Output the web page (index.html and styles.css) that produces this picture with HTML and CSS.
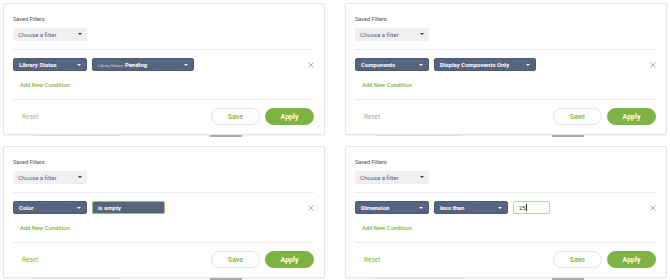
FILE: index.html
```html
<!DOCTYPE html>
<html lang="en">
<head>
    <meta charset="UTF-8">
    <meta name="viewport" content="width=device-width, initial-scale=1.0">
    <title>Filter Panels</title>
    <link rel="stylesheet" href="styles.css">
</head>
<body>
    <div class="panel-grid">

        <div class="panel-cell">
            <div class="filter-panel">
                <div class="saved-label">Saved Filters</div>
                <div class="saved-select">Choose a filter<span class="caret"></span></div>
                <div class="divider"></div>
                <div class="condition-row">
                    <div class="cond-select field-sm">Library Status<span class="caret light"></span></div>
                    <div class="cond-select field-lg"><span class="prefix">Library Status:</span> Pending<span class="caret light"></span></div>
                    <span class="remove-btn"><svg width="6" height="6" viewBox="0 0 6 6"><path d="M0.5 0.5L5.5 5.5M5.5 0.5L0.5 5.5" stroke="#9a9a9a" stroke-width="0.8"/></svg></span>
                </div>
                <div class="add-condition">Add New Condition</div>
                <div class="divider lower"></div>
                <div class="panel-footer">
                    <span class="reset-link">Reset</span>
                    <button class="save-btn">Save</button>
                    <button class="apply-btn">Apply</button>
                </div>
            </div>
            <div class="peek"><span class="peek-a"></span><span class="peek-b"></span></div>
        </div>

        <div class="panel-cell">
            <div class="filter-panel">
                <div class="saved-label">Saved Filters</div>
                <div class="saved-select">Choose a filter<span class="caret"></span></div>
                <div class="divider"></div>
                <div class="condition-row">
                    <div class="cond-select field-sm">Components<span class="caret light"></span></div>
                    <div class="cond-select field-lg">Display Components Only<span class="caret light"></span></div>
                    <span class="remove-btn"><svg width="6" height="6" viewBox="0 0 6 6"><path d="M0.5 0.5L5.5 5.5M5.5 0.5L0.5 5.5" stroke="#9a9a9a" stroke-width="0.8"/></svg></span>
                </div>
                <div class="add-condition">Add New Condition</div>
                <div class="divider lower"></div>
                <div class="panel-footer">
                    <span class="reset-link">Reset</span>
                    <button class="save-btn">Save</button>
                    <button class="apply-btn">Apply</button>
                </div>
            </div>
            <div class="peek"><span class="peek-a"></span><span class="peek-b"></span></div>
        </div>

        <div class="panel-cell">
            <div class="filter-panel">
                <div class="saved-label">Saved Filters</div>
                <div class="saved-select">Choose a filter<span class="caret"></span></div>
                <div class="divider"></div>
                <div class="condition-row">
                    <div class="cond-select field-sm">Color<span class="caret light"></span></div>
                    <div class="cond-select field-md focused">is empty</div>
                    <span class="remove-btn"><svg width="6" height="6" viewBox="0 0 6 6"><path d="M0.5 0.5L5.5 5.5M5.5 0.5L0.5 5.5" stroke="#9a9a9a" stroke-width="0.8"/></svg></span>
                </div>
                <div class="add-condition">Add New Condition</div>
                <div class="divider lower"></div>
                <div class="panel-footer">
                    <span class="reset-link active">Reset</span>
                    <button class="save-btn">Save</button>
                    <button class="apply-btn">Apply</button>
                </div>
            </div>
            <div class="peek"><span class="peek-a"></span><span class="peek-b"></span></div>
        </div>

        <div class="panel-cell">
            <div class="filter-panel">
                <div class="saved-label">Saved Filters</div>
                <div class="saved-select">Choose a filter<span class="caret"></span></div>
                <div class="divider"></div>
                <div class="condition-row">
                    <div class="cond-select field-sm">Dimension<span class="caret light"></span></div>
                    <div class="cond-select field-sm">less than<span class="caret light"></span></div>
                    <div class="value-input">25<span class="cursor"></span></div>
                    <span class="remove-btn"><svg width="6" height="6" viewBox="0 0 6 6"><path d="M0.5 0.5L5.5 5.5M5.5 0.5L0.5 5.5" stroke="#9a9a9a" stroke-width="0.8"/></svg></span>
                </div>
                <div class="add-condition">Add New Condition</div>
                <div class="divider lower"></div>
                <div class="panel-footer">
                    <span class="reset-link active">Reset</span>
                    <button class="save-btn">Save</button>
                    <button class="apply-btn">Apply</button>
                </div>
            </div>
            <div class="peek"><span class="peek-a"></span><span class="peek-b"></span></div>
        </div>

    </div>
</body>
</html>
```

FILE: styles.css
```css
body {
    margin: 0;
    padding: 3px;
    background: #fff;
    font-family: Roboto, 'Liberation Sans', sans-serif;
    color: #4a4f5a;
}
.panel-grid {
    display: grid;
    grid-template-columns: 322px 322px;
    column-gap: 20px;
    row-gap: 9px;
}
.filter-panel {
    box-sizing: border-box;
    height: 132px;
    padding: 11px 10px 0 9px;
    background: #fff;
    border: 1px solid #e6e6e6;
    border-radius: 2px;
    box-shadow: 0 1px 2px rgba(0, 0, 0, 0.06);
}
.saved-label {
    font-size: 5.8px;
    line-height: 8px;
    color: #555;
    letter-spacing: -0.1px;
}
.saved-select {
    position: relative;
    box-sizing: border-box;
    width: 74px;
    height: 13px;
    margin-top: 5px;
    padding-left: 5px;
    background: #f0f0f1;
    border-radius: 2px;
    font-size: 6px;
    line-height: 13px;
    color: #55607a;
}
.caret {
    position: absolute;
    right: 5px;
    top: 5px;
    width: 0;
    height: 0;
    border-left: 2px solid transparent;
    border-right: 2px solid transparent;
    border-top: 2.5px solid #333;
}
.caret.light {
    border-top-color: #fff;
}
.divider {
    height: 1px;
    margin-top: 8px;
    background: #ececec;
}
.divider.lower {
    margin-top: 9px;
}
.condition-row {
    display: flex;
    align-items: center;
    gap: 5px;
    height: 13px;
    margin-top: 8px;
}
.cond-select {
    position: relative;
    box-sizing: border-box;
    height: 13px;
    padding-left: 5px;
    background: #56647f;
    border: 1px solid #4d5a74;
    border-radius: 2px;
    color: #fff;
    font-size: 6px;
    font-weight: bold;
    line-height: 11px;
}
.field-sm {
    width: 74px;
}
.field-lg {
    width: 102px;
}
.field-md {
    width: 73px;
}
.cond-select.focused {
    border-color: #93bd76;
}
.prefix {
    font-size: 4px;
    font-weight: normal;
    color: #d4d9e3;
}
.value-input {
    box-sizing: border-box;
    width: 37px;
    height: 13px;
    padding-left: 5px;
    border: 1px solid #b4d99a;
    border-radius: 2px;
    font-size: 6px;
    line-height: 11px;
    color: #333;
}
.cursor {
    display: inline-block;
    width: 0.6px;
    height: 7px;
    margin-left: 0.5px;
    vertical-align: -1px;
    background: #333;
}
.remove-btn {
    display: flex;
    margin-left: auto;
}
.add-condition {
    margin-top: 10px;
    padding-left: 7px;
    font-size: 5.8px;
    font-weight: 500;
    line-height: 9px;
    color: #7ab648;
}
.panel-footer {
    display: flex;
    align-items: center;
    gap: 5px;
    margin-top: 8px;
}
.reset-link {
    margin-left: 9px;
    margin-right: auto;
    font-size: 6.5px;
    color: #aaa;
}
.reset-link.active {
    color: #7ab648;
}
.save-btn, .apply-btn {
    box-sizing: border-box;
    width: 49px;
    height: 17px;
    padding: 0;
    border-radius: 9px;
    font-family: inherit;
    font-size: 7px;
    font-weight: bold;
}
.save-btn {
    background: #fff;
    border: 1px solid #e3e3e3;
    color: #84bb55;
}
.apply-btn {
    background: #7cb342;
    border: 1px solid #7cb342;
    color: #fff;
}
.peek {
    position: relative;
    height: 2px;
}
.peek-a {
    position: absolute;
    left: 30px;
    width: 87px;
    height: 1px;
    background: #e2e2e2;
}
.peek-b {
    position: absolute;
    left: 207px;
    width: 32px;
    height: 2px;
    background: #a9a9a9;
}
```
